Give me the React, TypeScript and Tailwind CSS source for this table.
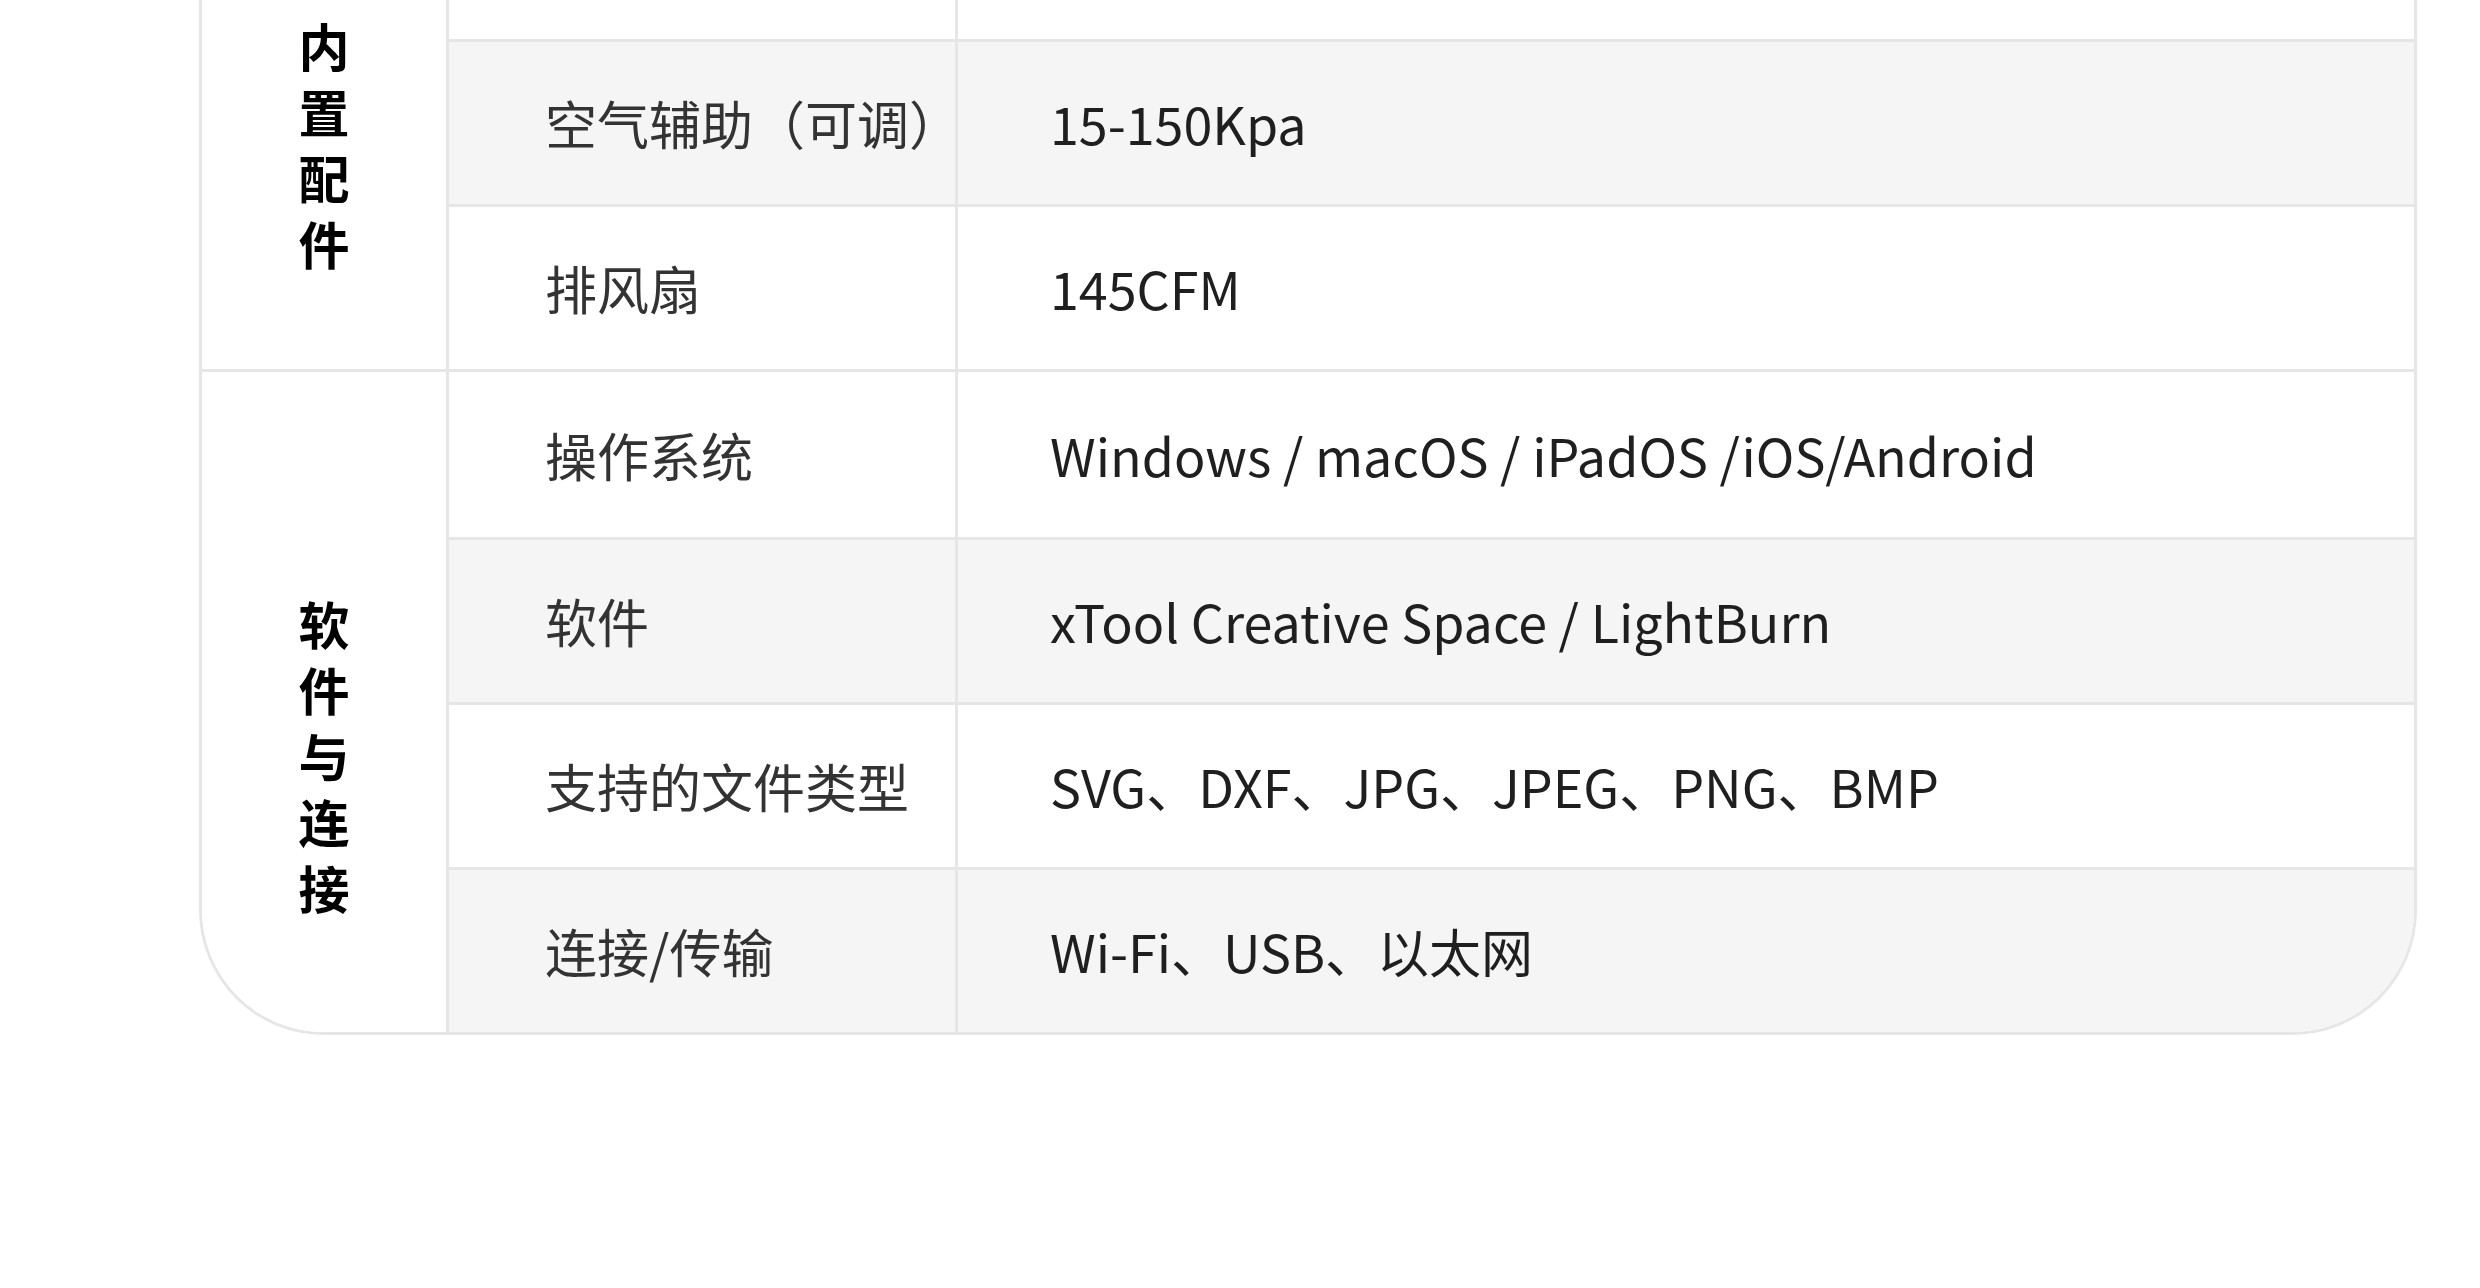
import React from 'react';

interface SpecRow {
  label: string;
  value: string;
  shaded?: boolean;
}

interface SpecGroup {
  name: string;
  padTop: string;
  rows: SpecRow[];
}

const groups: SpecGroup[] = [
  {
    name: '内置配件',
    padTop: 'pt-[12px]',
    rows: [
      { label: '', value: '' },
      { label: '空气辅助（可调）', value: '15-150Kpa', shaded: true },
      { label: '排风扇', value: '145CFM' },
    ],
  },
  {
    name: '软件与连接',
    padTop: 'pt-[218px]',
    rows: [
      { label: '操作系统', value: 'Windows / macOS / iPadOS /iOS/Android' },
      { label: '软件', value: 'xTool Creative Space / LightBurn', shaded: true },
      { label: '支持的文件类型', value: 'SVG、DXF、JPG、JPEG、PNG、BMP' },
      { label: '连接/传输', value: 'Wi-Fi、USB、以太网', shaded: true },
    ],
  },
];

function Row({ row, first, partial }: { row: SpecRow; first: boolean; partial: boolean }) {
  return (
    <div
      className={`flex ${partial ? 'h-[39px]' : 'h-[165px]'} ${first ? '' : 'border-t-[3px] border-[#e6e6e6]'} ${
        row.shaded ? 'bg-[#f5f5f5]' : 'bg-white'
      }`}
    >
      <div className="flex w-[509px] shrink-0 items-center border-r-[3px] border-[#e6e6e6] pl-[96px] text-[52px] text-[#333333]">
        {row.label}
      </div>
      <div className="flex flex-1 items-center pl-[92px] text-[52px] text-[#1f1f1f]">{row.value}</div>
    </div>
  );
}

export default function App() {
  return (
    <div
      className="h-[1288px] w-full overflow-hidden bg-white"
      style={{ fontFamily: '"Noto Sans CJK SC", "Noto Sans", sans-serif' }}
    >
      <div className="ml-[199px] w-[2218px] overflow-hidden rounded-b-[125px] border-x-[3px] border-b-[3px] border-[#e6e6e6]">
        {groups.map((group, gi) => (
          <div key={group.name} className={`flex ${gi > 0 ? 'border-t-[3px] border-[#e6e6e6]' : ''}`}>
            <div
              className={`flex w-[247px] shrink-0 flex-col items-center border-r-[3px] border-[#e6e6e6] bg-white ${group.padTop}`}
            >
              <p className="w-[52px] break-all text-center text-[51px] font-bold leading-[66px] text-black">
                {group.name}
              </p>
            </div>
            <div className="flex flex-1 flex-col">
              {group.rows.map((row, ri) => (
                <Row key={ri} row={row} first={ri === 0} partial={gi === 0 && ri === 0} />
              ))}
            </div>
          </div>
        ))}
      </div>
    </div>
  );
}
